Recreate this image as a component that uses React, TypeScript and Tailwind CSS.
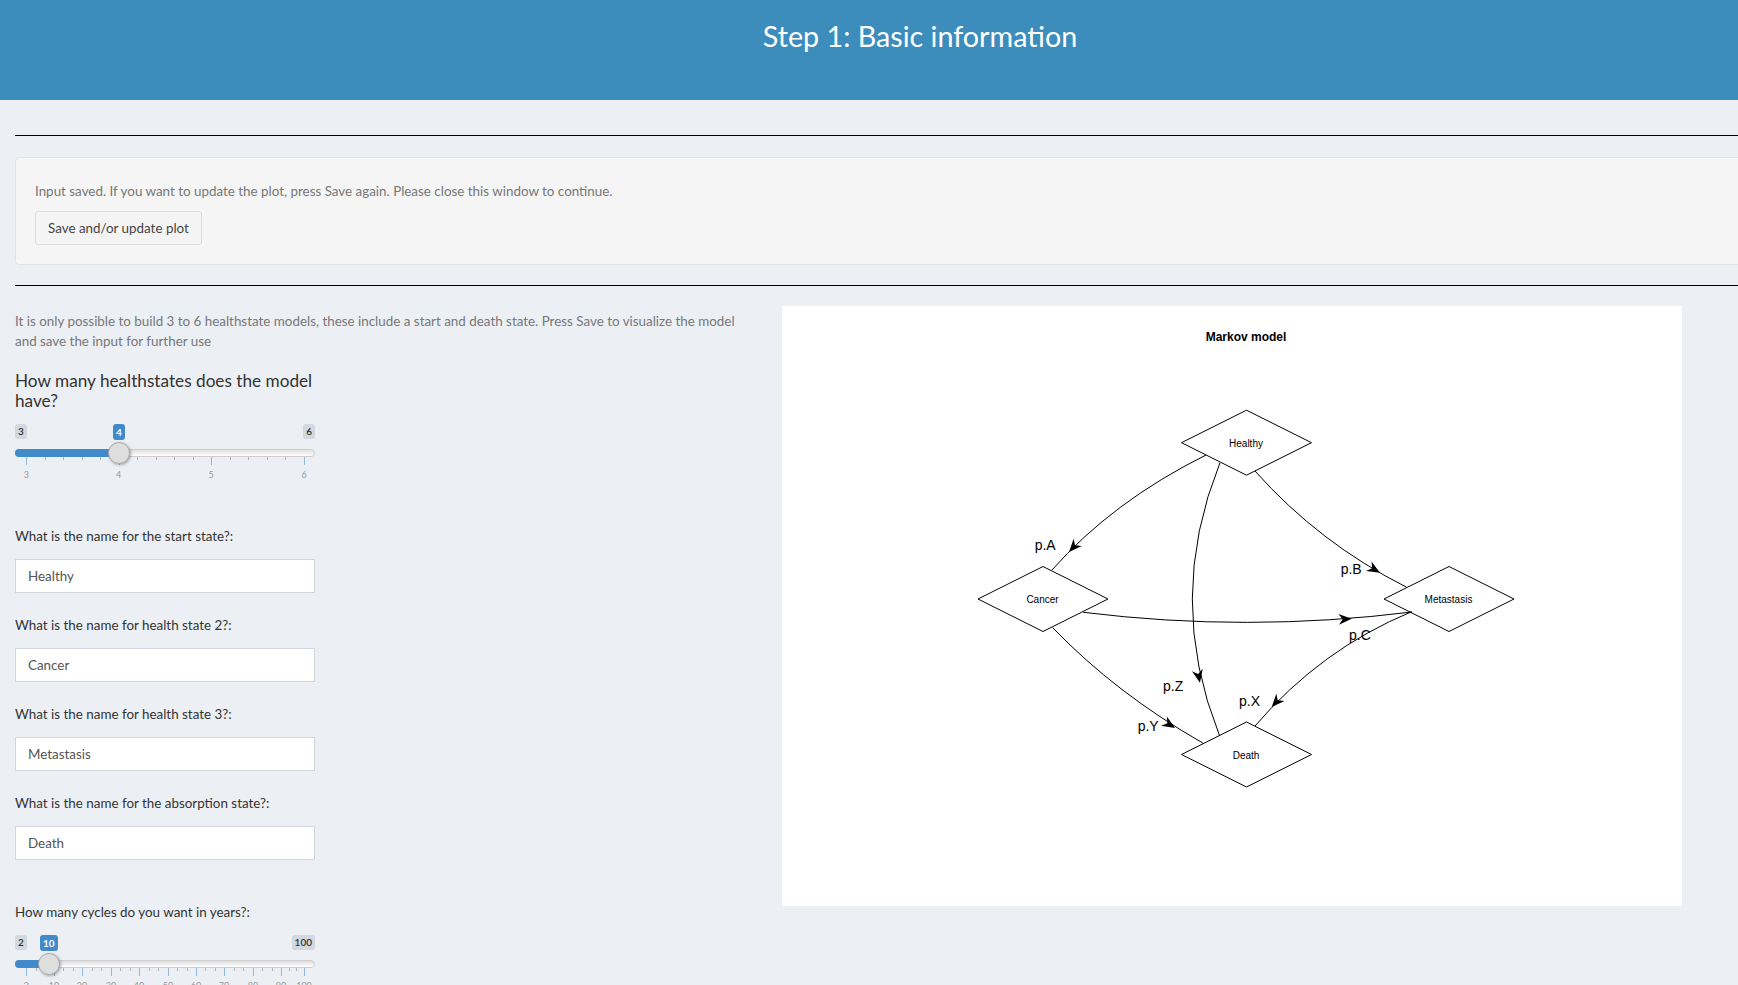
const majorA = [
  { x: 11.3, label: "3" },
  { x: 103.5, label: "4" },
  { x: 196, label: "5" },
  { x: 289, label: "6" },
];

const majorB = [
  { x: 11.3, label: "2" },
  { x: 39, label: "10" },
  { x: 67, label: "20" },
  { x: 96, label: "30" },
  { x: 124, label: "40" },
  { x: 153, label: "50" },
  { x: 181, label: "60" },
  { x: 209, label: "70" },
  { x: 238, label: "80" },
  { x: 266, label: "90" },
  { x: 289, label: "100" },
];

type SliderProps = {
  min: string;
  max: string;
  value: string;
  valueLeft: number;
  handle: number;
  ticks: { x: number; label: string }[];
  minorPerStep: number;
};

const Slider = ({ min, max, value, valueLeft, handle, ticks, minorPerStep }: SliderProps) => {
  const minors: number[] = [];
  ticks.slice(0, -1).forEach((t, i) => {
    const next = ticks[i + 1];
    for (let k = 1; k < minorPerStep; k++) {
      minors.push(t.x + ((next.x - t.x) * k) / minorPerStep);
    }
  });

  return (
    <div className="relative h-[60px] w-[300px]">
      <span className="absolute left-0 top-0 rounded-[3px] bg-[#d3d7de] px-[3px] text-[10px] font-semibold leading-[15px] text-[#333]">
        {min}
      </span>
      <span className="absolute right-0 top-0 rounded-[3px] bg-[#d3d7de] px-[3px] text-[10px] font-semibold leading-[15px] text-[#333]">
        {max}
      </span>
      <span
        className="absolute top-0 rounded-[3px] bg-[#428bca] px-[3px] text-[10px] font-bold leading-[16px] text-white"
        style={{ left: valueLeft }}
      >
        {value}
      </span>
      <div className="absolute left-0 right-0 top-[25px] h-[8px] rounded-full border border-[#cfcfcf] bg-gradient-to-b from-[#dedede] to-white" />
      <div
        className="absolute left-0 top-[25px] h-[8px] rounded-l-full bg-[#428bca]"
        style={{ width: handle }}
      />
      {minors.map((x) => (
        <div key={x} className="absolute top-[33px] h-[3px] w-px bg-[#b5b5b5]" style={{ left: x }} />
      ))}
      {ticks.map((t) => (
        <div key={t.label}>
          <div className="absolute top-[33px] h-[8px] w-px bg-[#8fb8dc]" style={{ left: t.x }} />
          <span
            className="absolute top-[45px] w-[24px] -translate-x-1/2 text-center text-[9px] leading-[12px] text-[#9a9a9a]"
            style={{ left: t.x }}
          >
            {t.label}
          </span>
        </div>
      ))}
      <div
        className="absolute top-[18px] h-[22px] w-[22px] -translate-x-1/2 rounded-full border border-[#ababab] bg-[#dedede] shadow-[1px_1px_3px_rgba(0,0,0,0.3)]"
        style={{ left: handle }}
      />
    </div>
  );
};

const TextField = ({ label, value }: { label: string; value: string }) => (
  <div className="w-[300px]">
    <label className="block h-[33px] text-[13.4px] leading-[20px] text-[#333]">{label}</label>
    <input
      readOnly
      value={value}
      className="h-[34px] w-full border border-[#d2d6de] bg-white px-3 text-[13.4px] text-[#555] outline-none"
    />
  </div>
);

const origin = { x: 782, y: 306 };

const Diamond = ({ x, y, label }: { x: number; y: number; label: string }) => (
  <g>
    <polygon
      points={`${x - 65},${y} ${x},${y - 32.5} ${x + 65},${y} ${x},${y + 32.5}`}
      fill="none"
      stroke="#000"
      strokeWidth="1"
    />
    <text x={x - 0.5} y={y + 4} textAnchor="middle" fontSize="10" fill="#000">
      {label}
    </text>
  </g>
);

const Arrow = ({ x, y, angle }: { x: number; y: number; angle: number }) => (
  <path d="M0 0 L-13 -5.5 L-9 0 L-13 5.5 Z" fill="#000" transform={`translate(${x} ${y}) rotate(${angle})`} />
);

const MarkovPlot = () => (
  <svg
    width="900"
    height="600"
    viewBox={`${origin.x} ${origin.y} 900 600`}
    className="block shrink-0 bg-white font-['Liberation_Sans',Arial,sans-serif]"
  >
    <text x="1246" y="341" textAnchor="middle" fontSize="12" fontWeight="700" fill="#000">
      Markov model
    </text>
    <Diamond x={1246.5} y={442.7} label="Healthy" />
    <Diamond x={1043} y={599} label="Cancer" />
    <Diamond x={1449} y={599} label="Metastasis" />
    <Diamond x={1246.5} y={754.5} label="Death" />
    <g fill="none" stroke="#000" strokeWidth="1">
      <path d="M1206 455 Q1112.5 501.5 1052 570" />
      <path d="M1255 471 Q1319 543 1406.7 587.3" />
      <path d="M1083.3 612.3 Q1247 632.6 1412 612" />
      <path d="M1411.7 611.7 Q1321 649 1255 726" />
      <path d="M1220 462.7 Q1165 599 1219.3 735" />
      <path d="M1052.7 627.7 Q1116 693.5 1203.3 743.3" />
    </g>
    <Arrow x={1069} y={552} angle={132} />
    <Arrow x={1380} y={572.7} angle={30} />
    <Arrow x={1351.7} y={618.7} angle={-3} />
    <Arrow x={1271.7} y={707} angle={132} />
    <Arrow x={1200} y={682.7} angle={78} />
    <Arrow x={1175} y={728} angle={32} />
    <g fontSize="14" fill="#000">
      <text x="1034.7" y="550">p.A</text>
      <text x="1340.7" y="574">p.B</text>
      <text x="1349" y="640">p.C</text>
      <text x="1163" y="691">p.Z</text>
      <text x="1239" y="706">p.X</text>
      <text x="1137.7" y="731">p.Y</text>
    </g>
  </svg>
);

export default function App() {
  return (
    <div className="h-[985px] w-[1738px] overflow-hidden bg-[#ecf0f5] font-['Lato',sans-serif]">
      <div className="w-[1840px]">
        <header className="h-[100px] bg-[#3c8dbc] pt-[14px] text-center text-[28.7px] leading-[44px] text-white">
          Step 1: Basic information
        </header>
        <main className="px-[15px]">
          <hr className="mt-[35px] border-t border-black" />
          <section className="mt-[21px] h-[108px] rounded border border-[#e3e3e3] bg-[#f5f5f5] px-[19px] pt-[23px]">
            <p className="text-[13.4px] leading-[20px] text-[#777]">
              Input saved. If you want to update the plot, press Save again. Please close this window to continue.
            </p>
            <button className="mt-[10px] h-[34px] rounded-[3px] border border-[#ddd] bg-[#f4f4f4] px-3 text-[13.4px] text-[#444]">
              Save and/or update plot
            </button>
          </section>
          <hr className="mt-[20px] border-t border-black" />
          <div className="mt-[20px] flex gap-[27px]">
            <div className="w-[740px] shrink-0">
              <p className="mt-[5px] text-[13.4px] leading-[20px] text-[#777]">
                It is only possible to build 3 to 6 healthstate models, these include a start and death state. Press Save to visualize the model
                <br />
                and save the input for further use
              </p>
              <h3 className="mt-[20px] w-[300px] text-[17.2px] leading-[20px] text-[#333]">
                How many healthstates does the model have?
              </h3>
              <div className="mt-[13px]">
                <Slider min="3" max="6" value="4" valueLeft={98} handle={104} ticks={majorA} minorPerStep={5} />
              </div>
              <div className="mt-[42px] flex flex-col gap-[22px]">
                <TextField label="What is the name for the start state?:" value="Healthy" />
                <TextField label="What is the name for health state 2?:" value="Cancer" />
                <TextField label="What is the name for health state 3?:" value="Metastasis" />
                <TextField label="What is the name for the absorption state?:" value="Death" />
              </div>
              <p className="mt-[42px] text-[13.4px] leading-[20px] text-[#333]">How many cycles do you want in years?:</p>
              <div className="mt-[13px]">
                <Slider min="2" max="100" value="10" valueLeft={25} handle={34} ticks={majorB} minorPerStep={3} />
              </div>
            </div>
            <MarkovPlot />
          </div>
        </main>
      </div>
    </div>
  );
}
